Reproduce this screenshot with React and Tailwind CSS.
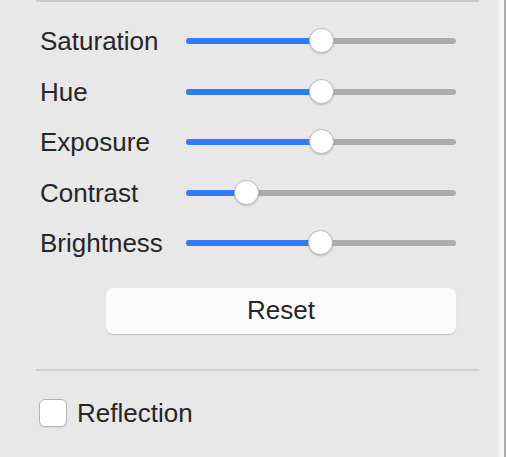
import React from 'react';

const rows = [
  { label: 'Saturation', value: 135 },
  { label: 'Hue', value: 135 },
  { label: 'Exposure', value: 135 },
  { label: 'Contrast', value: 60 },
  { label: 'Brightness', value: 134 },
];

// track is 270px wide; value = thumb centre offset in px
const Slider = ({ value }) => (
  <div className="relative w-[270px] h-[26px] flex items-center">
    <div className="h-[6px] w-full rounded-full bg-[#acacac] overflow-hidden">
      <div className="h-full bg-[#2f7cf6]" style={{ width: value }} />
    </div>
    <div
      className="absolute top-0 w-[25px] h-[25px] -ml-[12px] rounded-full bg-white border border-[#bdbdbd] shadow-[0_1px_2px_rgba(0,0,0,0.2)]"
      style={{ left: value }}
    />
  </div>
);

const App = () => {
  return (
    <div className="w-[507px] h-[457px] bg-[#e8e8e8] flex overflow-hidden text-[#262626] font-['Liberation_Sans',Arial,sans-serif]">
      <div className="flex-1 flex flex-col pl-[36px] pr-[19px]">
        <div className="h-[2px] bg-[#cbcbcb]" />

        <div className="flex flex-col pt-[14px]">
          {rows.map((r) => (
            <div key={r.label} className="h-[50.5px] flex items-center">
              <div className="w-[150px] pl-[4px] text-[26px] leading-none">{r.label}</div>
              <Slider value={r.value} />
            </div>
          ))}
        </div>

        <div className="pt-[19px] pl-[70px]">
          <button className="w-[350px] h-[46px] rounded-[7px] bg-[#fbfbfb] shadow-[0_1px_1px_rgba(0,0,0,0.18)] text-[26px] text-[#262626]">
            Reset
          </button>
        </div>

        <div className="mt-[35px] h-[2px] bg-[#d0d0d0]" />

        <label className="mt-[28px] flex items-center gap-[10px] pl-[3px]">
          <span className="w-[28px] h-[28px] rounded-[6px] bg-white border border-[#b4b4b4] shadow-[0_1px_1px_rgba(0,0,0,0.08)]" />
          <span className="text-[26px] leading-none">Reflection</span>
        </label>
      </div>

      <div className="w-[9px] flex">
        <div className="w-[3px] bg-[#f2f2f2]" />
        <div className="w-[3px] bg-[#f7f7f7]" />
        <div className="w-[2px] bg-[#ababab]" />
        <div className="w-[1px] bg-white" />
      </div>
    </div>
  );
};

export default App;
